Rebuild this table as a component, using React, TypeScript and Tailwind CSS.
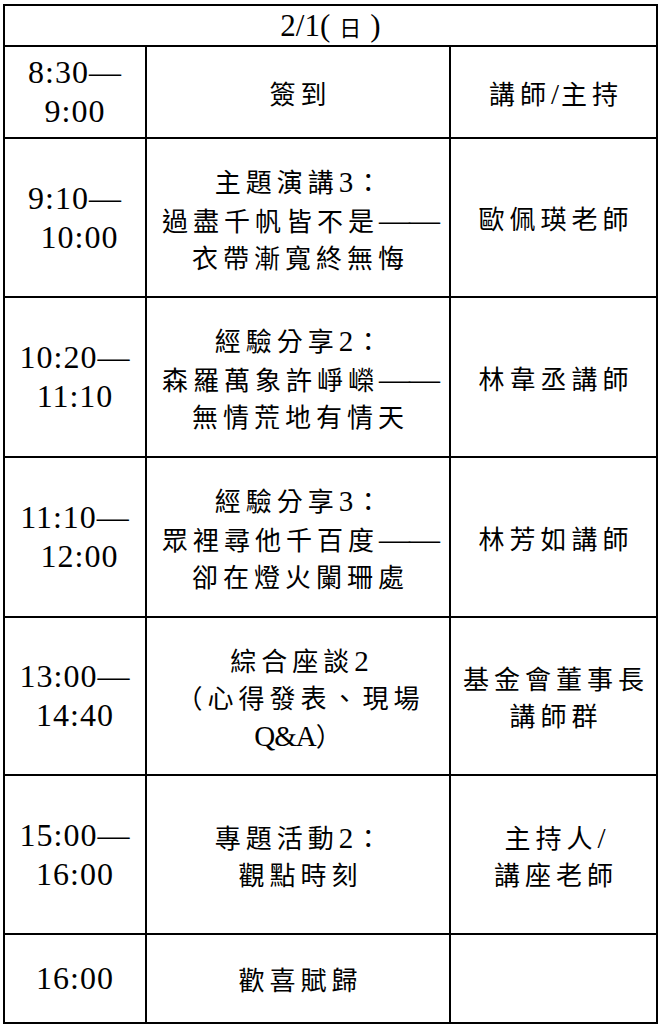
import React from 'react';

interface Row {
  time: string[];
  topic: string[];
  speaker: string[];
  height: string;
}

const rows: Row[] = [
  { time: ['8:30—', '9:00'], topic: ['簽到'], speaker: ['講師/主持'], height: 'h-[90px]' },
  {
    time: ['9:10—', '\u00a010:00'],
    topic: ['主題演講3：', '過盡千帆皆不是——', '衣帶漸寬終無悔'],
    speaker: ['歐佩瑛老師'],
    height: 'h-[157px]',
  },
  {
    time: ['10:20—', '11:10'],
    topic: ['經驗分享2：', '森羅萬象許崢嶸——', '無情荒地有情天'],
    speaker: ['林韋丞講師'],
    height: 'h-[158px]',
  },
  {
    time: ['11:10—', '\u00a012:00'],
    topic: ['經驗分享3：', '眾裡尋他千百度——', '卻在燈火闌珊處'],
    speaker: ['林芳如講師'],
    height: 'h-[158px]',
  },
  {
    time: ['13:00—', '14:40'],
    topic: ['綜合座談2', '（心得發表、現場', 'Q&A）'],
    speaker: ['基金會董事長', '講師群'],
    height: 'h-[156px]',
  },
  {
    time: ['15:00—', '16:00'],
    topic: ['專題活動2：', '觀點時刻'],
    speaker: ['主持人/', '講座老師'],
    height: 'h-[157px]',
  },
  { time: ['16:00'], topic: ['歡喜賦歸'], speaker: [], height: 'h-[87px]' },
];

const cjk = "font-['Liberation_Serif','Noto_Sans_CJK_TC',serif]";

// split a line so latin runs and dashes get their own sizing
function Runs({ text }: { text: string }) {
  const parts = text.split(/([A-Za-z0-9&/]+|—+)/).filter(Boolean);
  return (
    <>
      {parts.map((p, i) => {
        if (p.startsWith('—'))
          return (
            <span key={i} className="text-[31px] tracking-[-1px]">
              {p}
            </span>
          );
        if (/^[A-Za-z&]+$/.test(p))
          return (
            <span key={i} className="text-[29px] tracking-[-1px]">
              {p}
            </span>
          );
        if (/^[0-9/]+$/.test(p))
          return (
            <span key={i} className="text-[29px] tracking-[2px]">
              {p}
            </span>
          );
        return <span key={i}>{p}</span>;
      })}
    </>
  );
}

function Lines({ lines, time }: { lines: string[]; time?: boolean }) {
  if (time)
    return (
      <div className="font-['Liberation_Serif',serif] text-[32px] leading-[39px] tracking-[1px]">
        {lines.map((l, i) => (
          <div key={i} className="whitespace-pre text-center">
            {l}
          </div>
        ))}
      </div>
    );
  return (
    <div className={`${cjk} pt-[6px] pl-[5px] text-[26px] leading-[37px] tracking-[5px]`}>
      {lines.map((l, i) => (
        <div key={i} className="whitespace-pre text-center">
          <Runs text={l} />
        </div>
      ))}
    </div>
  );
}

export default function App() {
  return (
    <div className="h-[1026px] w-[662px] bg-white pl-[3px] pt-[4px]">
      <div className="grid w-[655px] grid-cols-[140px_302px_205px] gap-[2px] bg-black p-[2px] text-black">
        <div className="col-span-3 flex h-[39px] items-center justify-center bg-white">
          <span className={`${cjk} text-[31px] leading-none`}>
            2/1(<span className="mx-[9px] text-[22px]">日</span>)
          </span>
        </div>
        {rows.map((r, i) => (
          <React.Fragment key={i}>
            <div className={`flex items-center justify-center bg-white ${r.height}`}>
              <Lines lines={r.time} time />
            </div>
            <div className="flex items-center justify-center bg-white">
              <Lines lines={r.topic} />
            </div>
            <div className="flex items-center justify-center bg-white">
              <Lines lines={r.speaker} />
            </div>
          </React.Fragment>
        ))}
      </div>
    </div>
  );
}
